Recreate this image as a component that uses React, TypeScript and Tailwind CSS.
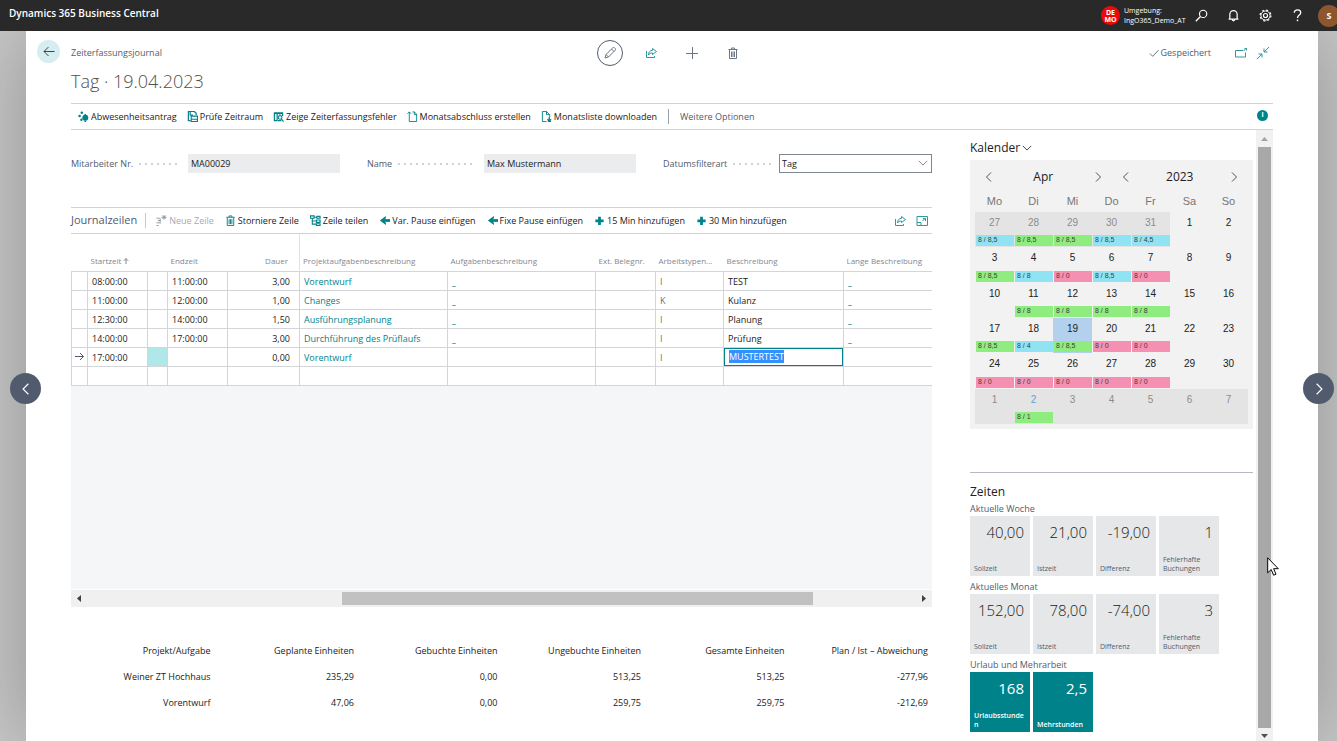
import { useEffect, useRef } from "react"
import type { ReactNode } from "react"

type IconProps = { className?: string }

function Glyph({ className = "", box = 16, children }: { className?: string; box?: number; children: ReactNode }) {
  return (
    <svg
      viewBox={`0 0 ${box} ${box}`}
      className={`shrink-0 ${className}`}
      fill="none"
      stroke="currentColor"
      strokeWidth={1}
      aria-hidden="true"
    >
      {children}
    </svg>
  )
}

const ChevronLeft = ({ className }: IconProps) => (
  <Glyph className={className} box={12}>
    <path d="M8 1.5 3.5 6 8 10.5" />
  </Glyph>
)

const ChevronRight = ({ className }: IconProps) => (
  <Glyph className={className} box={12}>
    <path d="M4 1.5 8.5 6 4 10.5" />
  </Glyph>
)

const ChevronDown = ({ className }: IconProps) => (
  <Glyph className={className} box={12}>
    <path d="M1 3.5 6 8.5 11 3.5" />
  </Glyph>
)

const ShareIcon = ({ className }: IconProps) => (
  <Glyph className={className} box={12}>
    <path d="M1.5 4v6.5h8V9M7.5 1.5l4 3-4 3V6C5.5 6 4.5 6.5 3.5 8 3.5 5 5 3.5 7.5 3.3z" />
  </Glyph>
)

const TrashIcon = ({ className }: IconProps) => (
  <Glyph className={className} box={12}>
    <path d="M1.5 2.5h9M4.5 2.5V1h3v1.5M2.5 2.5v9h7v-9M4.5 4.5V10M6 4.5V10M7.5 4.5V10" />
  </Glyph>
)

const AbsenceIcon = ({ className }: IconProps) => (
  <Glyph className={className} box={11}>
    <g fill="currentColor" stroke="none">
      <circle cx="3.8" cy="1.7" r="1.3" />
      <circle cx="1.6" cy="5" r="1.3" />
      <circle cx="3.4" cy="8.8" r="1.2" />
      <circle cx="7.3" cy="6.8" r="3" />
      <path d="M6.5 3h1.6v1.500H6.500zM6.500 9.500h1.600V11H6.500z" />
    </g>
  </Glyph>
)

const CheckPeriodIcon = ({ className }: IconProps) => (
  <Glyph className={className} box={12}>
    <path d="M4 10.500H1.500v-10h6.500l2 2v2M3.500 1v3.500h3" strokeWidth={1.300} />
    <path d="M4.600 5.600h6.800v5.800H4.600zM5 9h6" strokeWidth={1.200} />
  </Glyph>
)

const ShowErrorsIcon = ({ className }: IconProps) => (
  <Glyph className={className} box={12}>
    <path d="M4.500 10.500h-3v-8h9v3M4.500 2v8.500M1 2h10M7.500 2v2" strokeWidth={1.300} />
    <circle cx="7.700" cy="7" r="2" strokeWidth={1.200} />
    <path d="m9 8.500 2.500 3M5 10.500h4" strokeWidth={1.300} />
  </Glyph>
)

const MonthCloseIcon = ({ className }: IconProps) => (
  <Glyph className={className} box={12}>
    <path d="M2.500 1v10.500h8V3.500l-2.500-2.500H6M8 1v3h2.500M.5 3l2-2 2 2" />
  </Glyph>
)

const MonthListIcon = ({ className }: IconProps) => (
  <Glyph className={className} box={12}>
    <path d="M6 11.500H1.500V.5H6L9.500 4v2.500M6 .5V4h3.500" />
    <path d="M9 6.500V11M7 9l2 2 2-2M7.500 11.500h3.500" strokeWidth={1.400} />
  </Glyph>
)

const NewLineIcon = ({ className }: IconProps) => (
  <Glyph className={className} box={12}>
    <path d="M.5 3.500H4M2 6h3M.5 8.500H4M.5 11.500H3M4.500 3.500v6M6 2.500h5.500M8.800 0v5M7 .7l3.600 3.600M10.600.7 7 4.300" />
  </Glyph>
)

const SplitIcon = ({ className }: IconProps) => (
  <Glyph className={className} box={12}>
    <path
      d="M.5 1h4v2.500h-4zM5 2.500h2M2.500 3.500v6.500h4M2.500 6.500h4M7.500 1.500h3.500v2H7.500zM7 5.500h4V8H7zM7 9.500h4v2H7z"
      strokeWidth={1.200}
    />
  </Glyph>
)

const ArrowSolidIcon = ({ className }: IconProps) => (
  <Glyph className={className} box={12}>
    <path d="M12 6H3" strokeWidth={3} />
    <path d="M7.500 1 1 6l6.500 5V8.500L5 6l2.500-2.500z" fill="currentColor" stroke="none" />
  </Glyph>
)

const PlusSolidIcon = ({ className }: IconProps) => (
  <Glyph className={className} box={12}>
    <path d="M6 2v9M1.500 6.500h9" strokeWidth={3} />
  </Glyph>
)

const actions = [
  { label: "Abwesenheitsantrag", icon: AbsenceIcon },
  { label: "Prüfe Zeitraum", icon: CheckPeriodIcon },
  { label: "Zeige Zeiterfassungsfehler", icon: ShowErrorsIcon },
  { label: "Monatsabschluss erstellen", icon: MonthCloseIcon },
  { label: "Monatsliste downloaden", icon: MonthListIcon },
]

const lineActions = [
  { label: "Neue Zeile", icon: NewLineIcon, disabled: true },
  { label: "Storniere Zeile", icon: TrashIcon },
  { label: "Zeile teilen", icon: SplitIcon },
  { label: "Var. Pause einfügen", icon: ArrowSolidIcon },
  { label: "Fixe Pause einfügen", icon: ArrowSolidIcon },
  { label: "15 Min hinzufügen", icon: PlusSolidIcon },
  { label: "30 Min hinzufügen", icon: PlusSolidIcon },
]

const lines = [
  { start: "08:00:00", end: "11:00:00", duration: "3,00", task: "Vorentwurf", type: "I", text: "TEST" },
  { start: "11:00:00", end: "12:00:00", duration: "1,00", task: "Changes", type: "K", text: "Kulanz" },
  { start: "12:30:00", end: "14:00:00", duration: "1,50", task: "Ausführungsplanung", type: "I", text: "Planung" },
  { start: "14:00:00", end: "17:00:00", duration: "3,00", task: "Durchführung des Prüflaufs", type: "I", text: "Prüfung" },
  { start: "17:00:00", end: "", duration: "0,00", task: "Vorentwurf", type: "I", text: "MUSTERTEST", active: true },
  { start: "", end: "", duration: "", task: "", type: "", text: "" },
]

const totals = [
  ["Weiner ZT Hochhaus", "235,29", "0,00", "513,25", "513,25", "-277,96"],
  ["Vorentwurf", "47,06", "0,00", "259,75", "259,75", "-212,69"],
]

const totalHeads = [
  "Projekt/Aufgabe",
  "Geplante Einheiten",
  "Gebuchte Einheiten",
  "Ungebuchte Einheiten",
  "Gesamte Einheiten",
  "Plan / Ist – Abweichung",
]

const tones = {
  b: "bg-[#8fe3f3]",
  g: "bg-[#8fec7f]",
  r: "bg-[#f590b2]",
}

type Day = { day: number; tone?: keyof typeof tones; hours?: string; outside?: boolean }

// keyed by position in the 6x7 month grid
const entries: Record<number, [keyof typeof tones, string]> = {
  0: ["b", "8 / 8,5"],
  1: ["g", "8 / 8,5"],
  2: ["g", "8 / 8,5"],
  3: ["b", "8 / 8,5"],
  4: ["b", "8 / 4,5"],
  7: ["g", "8 / 8,5"],
  8: ["b", "8 / 8"],
  9: ["r", "8 / 0"],
  10: ["b", "8 / 8,5"],
  11: ["r", "8 / 0"],
  15: ["g", "8 / 8"],
  16: ["g", "8 / 8"],
  17: ["g", "8 / 8"],
  18: ["g", "8 / 8"],
  21: ["g", "8 / 8,5"],
  22: ["b", "8 / 4"],
  23: ["g", "8 / 8,5"],
  24: ["r", "8 / 0"],
  25: ["r", "8 / 0"],
  28: ["r", "8 / 0"],
  29: ["r", "8 / 0"],
  30: ["r", "8 / 0"],
  31: ["r", "8 / 0"],
  32: ["r", "8 / 0"],
  36: ["g", "8 / 1"],
}

const days: Day[] = Array.from({ length: 42 }, (_, i) => {
  const day = i < 5 ? 27 + i : i < 35 ? i - 4 : i - 34
  const entry = entries[i]
  return { day, tone: entry?.[0], hours: entry?.[1], outside: i < 5 || i > 34 }
})

const tileGroups = [
  {
    title: "Aktuelle Woche",
    tiles: [["40,00", "Sollzeit"], ["21,00", "Istzeit"], ["-19,00", "Differenz"], ["1", "Fehlerhafte Buchungen"]],
  },
  {
    title: "Aktuelles Monat",
    tiles: [["152,00", "Sollzeit"], ["78,00", "Istzeit"], ["-74,00", "Differenz"], ["3", "Fehlerhafte Buchungen"]],
  },
  {
    title: "Urlaub und Mehrarbeit",
    accent: true,
    tiles: [["168", "Urlaubsstunden"], ["2,5", "Mehrstunden"]],
  },
]

function TopBar() {
  return (
    <header className="z-10 flex h-[31px] shrink-0 items-center bg-[#292929] pl-[9px] text-white">
      <div className="flex-1 pb-1 text-[10px] font-semibold">Dynamics 365 Business Central</div>
      <div className="flex items-center gap-1">
        <span className="flex size-[19px] flex-col items-center justify-center rounded-full bg-[#f00808] text-[7px] leading-[7px] font-bold">
          <span>DE</span>
          <span>MO</span>
        </span>
        <span className="w-[65px] text-[7px] leading-[10px] whitespace-nowrap">
          Umgebung:
          <br />
          IngO365_Demo_AT
        </span>
      </div>
      <div className="flex items-center gap-4 pl-1">
        <button aria-label="Suchen" className="flex size-4 items-center justify-center">
          <Glyph className="size-[13px]">
            <circle cx="10" cy="6" r="4.500" strokeWidth={1.400} />
            <path d="M6.700 9.300 1 15" strokeWidth={1.600} />
          </Glyph>
        </button>
        <button aria-label="Benachrichtigungen" className="flex size-4 items-center justify-center">
          <Glyph className="size-[13px]">
            <path
              d="M2 12.500h12M3.500 12.500V6.500a4.500 4.500 0 0 1 9 0v6M6.500 13a1.500 1.500 0 0 0 3 0"
              strokeWidth={1.500}
            />
          </Glyph>
        </button>
        <button aria-label="Einstellungen" className="flex size-4 items-center justify-center">
          <Glyph className="size-[13px]">
            <circle cx="8" cy="8" r="5.600" strokeWidth={1.200} />
            <circle cx="8" cy="8" r="2.500" strokeWidth={1.400} />
            <circle cx="8" cy="8" r="6.700" strokeWidth={1.400} strokeDasharray="2.630 2.630" />
          </Glyph>
        </button>
        <button aria-label="Hilfe" className="flex size-4 items-center justify-center">
          <Glyph className="size-[13px]">
            <path d="M4 4.500C4 2.500 5.500 1 8 1s4 1.500 4 3.500c0 3-4 3-4 6.500" strokeWidth={1.600} />
            <path d="M8 13v2" strokeWidth={1.800} />
          </Glyph>
        </button>
      </div>
      <button
        aria-label="Konto"
        className="-mr-[3px] ml-[13px] flex size-[22px] items-center justify-center rounded-full bg-[#8e562e] text-[9px] font-bold"
      >
        S
      </button>
    </header>
  )
}

function PageHeader() {
  return (
    <div className="pr-[45px] pl-[11px]">
      <div className="flex h-10 items-center pt-1">
        <button
          aria-label="Zurück"
          className="mr-[11px] mb-[3px] flex size-[23px] items-center justify-center rounded-full bg-[#d6eef1] text-[#444]"
        >
          <Glyph className="size-3" box={12}>
            <path d="M11.500 5.500H1M5.500 1 1 5.500 5.500 10" />
          </Glyph>
        </button>
        <div className="flex-1 text-[9px] text-[#505c6d]">Zeiterfassungsjournal</div>
        <div className="mr-1 flex items-center gap-[29px] text-[#6b7583]">
          <button
            aria-label="Bearbeiten"
            className="-mr-[7px] flex size-[26px] items-center justify-center rounded-full border border-[#505c6d]"
          >
            <Glyph className="size-3" box={12}>
              <path d="m1 11 1-3.500L8.800.8a1.300 1.300 0 0 1 1.800 0l.6.6a1.300 1.300 0 0 1 0 1.800L4.500 10zM7.500 2l2.500 2.500M2 7.500 4.500 10" />
            </Glyph>
          </button>
          <button aria-label="Teilen" className="text-[#2f989e]">
            <ShareIcon className="size-3" />
          </button>
          <button aria-label="Neu">
            <Glyph className="size-3" box={12}>
              <path d="M6.500 0v12M0 6.500h12" />
            </Glyph>
          </button>
          <button aria-label="Löschen">
            <TrashIcon className="size-3" />
          </button>
        </div>
        <div className="flex flex-1 items-center justify-end gap-3 pr-1 text-[9px] text-[#505c6d]">
          <span className="mr-3 flex items-center gap-[2px]">
            <Glyph className="size-[10px]" box={12}>
              <path d="m1 6.500 3.500 3.500 7-7.500" />
            </Glyph>
            Gespeichert
          </span>
          <button aria-label="In neuem Fenster öffnen" className="text-[#2f989e]">
            <Glyph className="size-3" box={12}>
              <path d="M8 3.500H.5v6.500h10V5.500M8.500 4l2.500-2.500M9.500 1.500h2v2" />
            </Glyph>
          </button>
          <button aria-label="Verkleinern" className="-ml-[2px] text-[#2f989e]">
            <Glyph className="size-3" box={12}>
              <path d="M12 0 7 5M7 1.500V5h3.500M0 12l5-5M1.500 7H5v3.500" />
            </Glyph>
          </button>
        </div>
      </div>
      <h1 className="ml-[34px] h-8 text-[18px] leading-5 font-light text-[#505050]">Tag · 19.04.2023</h1>
      <div className="ml-[34px] flex h-[27px] items-center border-y border-[#d0d2d4] pl-[7px] text-[9px] text-[#212121]">
        <div className="flex items-center gap-[10px]">
          {actions.map(({ label, icon: Icon }) => (
            <button key={label} className="flex items-center gap-[2px] whitespace-nowrap">
              <Icon className="size-[11px] text-[#00828a]" />
              {label}
            </button>
          ))}
        </div>
        <span className="mx-[11px] h-[15px] w-px bg-[#9aa1ab]" />
        <button className="text-[#505c6d]">Weitere Optionen</button>
        <button
          aria-label="Info"
          className="mr-[5px] mb-[2px] ml-auto flex size-[11px] items-center justify-center rounded-full bg-[#00828a] text-[7px] font-bold text-white"
        >
          i
        </button>
      </div>
    </div>
  )
}

function Leader() {
  return (
    <span className="mr-2 ml-1 h-[2px] flex-1 bg-[radial-gradient(circle,#d0d3d6_1px,transparent_1px)] bg-[length:6px_2px]" />
  )
}

function Fields() {
  return (
    <div className="grid grid-cols-3 gap-[27px] text-[9px] text-[#505c6d]">
      <div className="flex items-center">
        <label htmlFor="employee">Mitarbeiter Nr.</label>
        <Leader />
        <input
          id="employee"
          readOnly
          value="MA00029"
          className="h-[19px] w-[152px] bg-[#ebecee] px-[3px] text-[#212121] outline-none"
        />
      </div>
      <div className="flex items-center">
        <label htmlFor="name">Name</label>
        <Leader />
        <input
          id="name"
          readOnly
          value="Max Mustermann"
          className="h-[19px] w-[152px] bg-[#ebecee] px-[3px] text-[#212121] outline-none"
        />
      </div>
      <div className="flex items-center">
        <label htmlFor="filter">Datumsfilterart</label>
        <Leader />
        <div className="relative">
          <select
            id="filter"
            defaultValue="Tag"
            className="block h-[19px] w-[153px] appearance-none border border-[#7f8793] bg-white px-[2px] text-[#212121] outline-none"
          >
            <option>Tag</option>
          </select>
          <ChevronDown className="pointer-events-none absolute top-1 right-1 size-[10px] text-[#8a6a55]" />
        </div>
      </div>
    </div>
  )
}

function LinesTable() {
  const input = useRef<HTMLInputElement>(null)

  useEffect(() => {
    input.current?.focus()
    input.current?.select()
  }, [])

  const head = "pb-1 pl-[3px] text-left align-bottom font-normal whitespace-nowrap"
  const cell = "border border-[#d3d5d8] pt-[2px] pr-0 pb-0 pl-1"

  return (
    <table className="w-full table-fixed border-collapse text-[9px] text-[#212121]">
      <colgroup>
        <col className="w-4" />
        <col className="w-[60px]" />
        <col className="w-5" />
        <col className="w-[60px]" />
        <col className="w-[72px]" />
        <col className="w-[148px]" />
        <col className="w-[148px]" />
        <col className="w-[60px]" />
        <col className="w-[68px]" />
        <col className="w-[120px]" />
        <col />
      </colgroup>
      <thead className="text-[8px] text-[#7f8793]">
        <tr className="h-[37px]">
          <th />
          <th className={head}>
            <span className="flex items-center gap-[2px]">
              Startzeit
              <Glyph className="size-[6px]" box={6}>
                <path d="M3 6V.5M.8 2.800 3 .6l2.200 2.200" />
              </Glyph>
            </span>
          </th>
          <th />
          <th className={head}>Endzeit</th>
          <th className="border-r border-[#e0e2e4] pr-[11px] pb-1 text-right align-bottom font-normal">Dauer</th>
          <th className={head}>Projektaufgabenbeschreibung</th>
          <th className={head}>Aufgabenbeschreibung</th>
          <th className={head}>Ext. Belegnr.</th>
          <th className={head}>Arbeitstypen...</th>
          <th className={head}>Beschreibung</th>
          <th className={head}>Lange Beschreibung</th>
        </tr>
      </thead>
      <tbody>
        {lines.map((line, i) => (
          <tr key={i} className="h-[19px]">
            <td className="border border-[#d3d5d8] p-0">
              {line.active && (
                <Glyph className="mx-auto size-[9px] text-[#505c6d]" box={9}>
                  <path d="M0 4.500h8.500M5 1l3.500 3.500L5 8" />
                </Glyph>
              )}
            </td>
            <td className={cell}>{line.start}</td>
            <td className={line.active ? "border border-[#d3d5d8] bg-[#b0e8ea] p-0" : "border border-[#d3d5d8] p-0"} />
            <td className={cell}>{line.end}</td>
            <td className="border border-[#d3d5d8] pt-[2px] pr-[9px] pb-0 text-right">{line.duration}</td>
            <td className={cell}>
              {line.task && (
                <a href="#" className="text-[#00828a]">
                  {line.task}
                </a>
              )}
            </td>
            <td className={cell}>
              {line.task && !line.active && (
                <a href="#" className="font-bold text-[#00828a]">
                  _
                </a>
              )}
            </td>
            <td className={cell} />
            <td className="border border-[#d3d5d8] pt-[2px] pr-0 pb-0 pl-1 text-[#6f6f6f]">{line.type}</td>
            <td className={line.active ? "border border-[#d3d5d8] p-0" : cell}>
              {line.active ? (
                <input
                  ref={input}
                  aria-label="Beschreibung"
                  defaultValue={line.text}
                  className="block h-[18px] w-full border border-[#00828a] px-1 outline-none selection:bg-[#3390ff] selection:text-white"
                />
              ) : (
                line.text
              )}
            </td>
            <td className="border border-r-0 border-[#d3d5d8] pt-[2px] pr-0 pb-0 pl-1">
              {line.task && !line.active && (
                <a href="#" className="font-bold text-[#00828a]">
                  _
                </a>
              )}
            </td>
          </tr>
        ))}
      </tbody>
    </table>
  )
}

function JournalLines() {
  return (
    <section className="mt-[34px] flex min-h-0 flex-1 flex-col">
      <div className="flex h-[27px] shrink-0 items-center border-y border-[#d0d2d4] text-[9px] text-[#212121]">
        <h2 className="text-[11px] text-[#505c6d]">Journalzeilen</h2>
        <span className="mr-[10px] ml-2 h-[15px] w-px bg-[#c5c9ce]" />
        <div className="flex items-center gap-[11px]">
          {lineActions.map(({ label, icon: Icon, disabled }) => (
            <button
              key={label}
              disabled={disabled}
              className="group flex items-center gap-[2px] whitespace-nowrap disabled:text-[#a6abb2]"
            >
              <Icon className="size-[11px] text-[#00828a] group-disabled:text-[#8f959c]" />
              {label}
            </button>
          ))}
        </div>
        <div className="mr-1 ml-auto flex items-center gap-[10px] text-[#2f989e]">
          <button aria-label="Teilen">
            <ShareIcon className="size-3" />
          </button>
          <button aria-label="Maximieren">
            <Glyph className="size-3" box={12}>
              <path d="M1 1.500h10.500v9H1zM1 7.500h4v3M6.500 6l3-3M7 3.500h2.500V6" />
            </Glyph>
          </button>
        </div>
      </div>
      <LinesTable />
      <div className="min-h-0 flex-1 bg-[#f5f6f8]" />
      <div className="mt-px flex h-[17px] shrink-0 items-center bg-[#f0f0f0] px-[6px] text-[#404040]">
        <svg viewBox="0 0 4 7" className="h-[7px] w-1" fill="currentColor">
          <path d="M4 0v7L0 3.500z" />
        </svg>
        <div className="flex h-[13px] flex-1">
          <span className="flex-[31]" />
          <span className="flex-[56] bg-[#c1c1c1]" />
          <span className="flex-[13]" />
        </div>
        <svg viewBox="0 0 4 7" className="h-[7px] w-1" fill="currentColor">
          <path d="M0 0v7l4-3.500z" />
        </svg>
      </div>
    </section>
  )
}

function Totals() {
  return (
    <table className="mt-[31px] mb-[25px] w-full table-fixed text-right text-[9px] text-[#212121]">
      <thead>
        <tr className="h-[26px]">
          {totalHeads.map((head) => (
            <th key={head} className="pr-1 font-normal">
              {head}
            </th>
          ))}
        </tr>
      </thead>
      <tbody>
        {totals.map((row) => (
          <tr key={row[0]} className="h-[26px]">
            {row.map((value, i) => (
              <td key={i} className="pr-1">
                {value}
              </td>
            ))}
          </tr>
        ))}
      </tbody>
    </table>
  )
}

function Stepper({ label, unit }: { label: string; unit: string }) {
  return (
    <div className="flex flex-1 items-center justify-between px-2">
      <button aria-label={`${unit} zurück`} className="text-[#44546a]">
        <ChevronLeft className="size-3" />
      </button>
      <span className="text-[12px] text-[#212121]">{label}</span>
      <button aria-label={`${unit} vor`} className="text-[#44546a]">
        <ChevronRight className="size-3" />
      </button>
    </div>
  )
}

function Calendar() {
  return (
    <div className="mt-[3px] bg-[#f2f2f2] px-[5px] pb-[5px] font-['Liberation_Sans',Arial,sans-serif]">
      <div className="flex h-[34px] items-center font-['Open_Sans',sans-serif]">
        <Stepper label="Apr" unit="Monat" />
        <Stepper label="2023" unit="Jahr" />
      </div>
      <div className="grid h-[18px] grid-cols-7 text-center text-[11px] leading-[15px] text-[#767676]">
        {["Mo", "Di", "Mi", "Do", "Fr", "Sa", "So"].map((name) => (
          <span key={name}>{name}</span>
        ))}
      </div>
      <div className="grid h-[212px] grid-cols-7 grid-rows-6 text-[10px]">
        {days.map(({ day, tone, hours, outside }, i) => (
          <button
            key={i}
            className={`flex flex-col justify-between pb-px ${
              i === 23 ? "bg-[#b3d1ec]" : outside ? "bg-[#e4e4e4]" : ""
            } ${i === 36 ? "text-[#5ba3d9]" : outside ? "text-[#8c8c8c]" : "text-[#212121]"}`}
          >
            <span className="w-full text-center leading-[22px]">{day}</span>
            {tone && (
              <span
                className={`ml-px h-[11px] w-[38px] pl-[2px] text-left text-[7px] leading-[9px] text-[#404040] ${tones[tone]}`}
              >
                {hours}
              </span>
            )}
          </button>
        ))}
      </div>
    </div>
  )
}

function Times() {
  return (
    <section className="mt-[43px] border-t border-[#b4b9c2] pt-[11px]">
      <h2 className="text-[12px] leading-4 text-[#212121]">Zeiten</h2>
      {tileGroups.map((group) => (
        <div key={group.title} className="mb-[2px]">
          <h3 className="h-4 pt-[2px] text-[9px] leading-[14px] text-[#505c6d]">{group.title}</h3>
          <div className="flex gap-[3px]">
            {group.tiles.map(([value, label]) => (
              <button
                key={label}
                className={`flex size-[60px] flex-col justify-between pt-[6px] pb-[3px] pl-1 ${
                  group.accent ? "bg-[#00828a] font-semibold text-white" : "bg-[#e5e7e9] text-[#505c6d]"
                }`}
              >
                <span
                  className={`w-full pr-[6px] text-right text-[15px] leading-5 ${
                    group.accent ? "font-normal" : "font-light text-[#212121]"
                  }`}
                >
                  {value}
                </span>
                <span className="w-[50px] text-left text-[7px] leading-[9px] break-words">{label}</span>
              </button>
            ))}
          </div>
        </div>
      ))}
    </section>
  )
}

export default function App() {
  return (
    <div className="relative flex h-screen flex-col overflow-hidden bg-[#c8c8c8] font-['Open_Sans','Noto_Sans',sans-serif]">
      <TopBar />
      <div className="flex min-h-0 flex-1 pr-[19px] pl-[26px]">
        <main className="flex min-w-0 flex-1 flex-col bg-white shadow-[0_0_80px_0_rgba(0,0,0,0.28)]">
          <PageHeader />
          <div className="flex min-h-0 flex-1 pr-[45px] pl-[45px]">
            <div className="flex min-w-0 flex-1 flex-col pt-6">
              <Fields />
              <JournalLines />
              <Totals />
            </div>
            <aside className="ml-[38px] w-[283px] shrink-0 pt-2">
              <h2 className="flex items-center gap-[2px] text-[12px] leading-[19px] text-[#212121]">
                Kalender
                <ChevronDown className="size-[10px]" />
              </h2>
              <Calendar />
              <Times />
            </aside>
            <div className="ml-[3px] flex w-[17px] shrink-0 flex-col items-center bg-[#f1f1f1] pt-[7px] pb-[3px]">
              <svg viewBox="0 0 7 4" className="h-1 w-[7px]" fill="#a3a3a3">
                <path d="M0 4h7L3.500 0z" />
              </svg>
              <div className="my-[6px] w-[13px] flex-1 bg-[#a8a8a8]" />
              <svg viewBox="0 0 7 4" className="h-1 w-[7px]" fill="#505050">
                <path d="M0 0h7L3.500 4z" />
              </svg>
            </div>
          </div>
        </main>
      </div>
      <button
        aria-label="Vorheriger Eintrag"
        className="absolute top-[373px] left-[10px] flex size-[31px] items-center justify-center rounded-full bg-[#505c6d] text-white"
      >
        <ChevronLeft className="size-[14px]" />
      </button>
      <button
        aria-label="Nächster Eintrag"
        className="absolute top-[373px] right-[3px] flex size-[31px] items-center justify-center rounded-full bg-[#505c6d] text-white"
      >
        <ChevronRight className="size-[14px]" />
      </button>
      <svg viewBox="0 0 12 19" className="absolute top-[557px] right-[58px] h-[19px] w-3">
        <path
          d="M.7.800v15l3.500-3.300 2.400 5.700 2.400-1-2.400-5.500h4.700z"
          fill="#fff"
          stroke="#000"
          strokeWidth={1}
        />
      </svg>
    </div>
  )
}
